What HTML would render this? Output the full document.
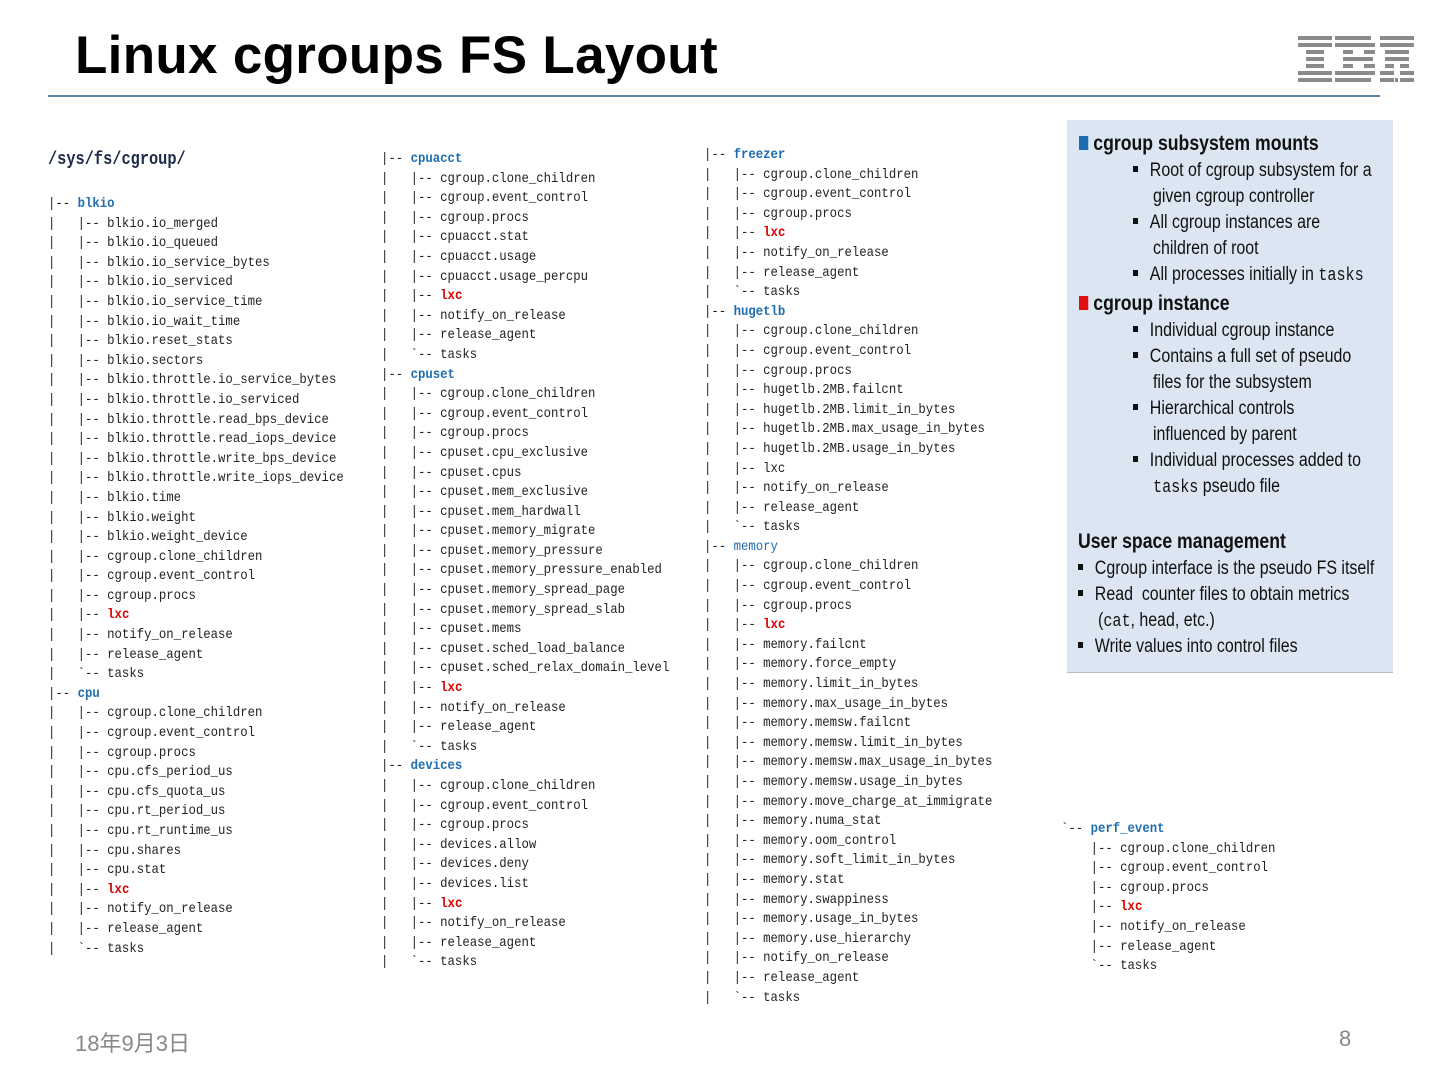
<!DOCTYPE html>
<html><head><meta charset="utf-8"><style>
body{margin:0;width:1440px;height:1080px;background:#fff;position:relative;overflow:hidden;font-family:"Liberation Sans",sans-serif}
.t{position:absolute;left:75px;top:25px;font-size:53px;font-weight:bold;color:#000;letter-spacing:0.3px}
.hr{position:absolute;left:48px;top:95px;width:1332px;height:2px;background:#5a85a8}
pre{position:absolute;margin:0;font-family:"Liberation Mono",monospace;font-size:14px;line-height:19.6px;color:#222;transform:scaleX(0.88);transform-origin:0 0}
.b{color:#1f6db0;font-weight:bold}
.r{color:#d00;font-weight:bold}
.root{position:absolute;left:48px;top:150px;font-family:"Liberation Mono",monospace;font-size:18px;font-weight:bold;color:#1d2a48;transform:scaleX(0.85);transform-origin:0 0}
.box{position:absolute;left:1067px;top:120px;width:326px;height:552px;background:#dce6f2;border-bottom:1px solid #bbb}
.l{position:absolute;font-family:"Liberation Sans",sans-serif;font-size:19px;color:#111;white-space:nowrap;line-height:26px;transform:scaleX(0.84);transform-origin:0 0}
.h{font-weight:bold;font-size:21px}
.sq{display:inline-block;width:11px;height:14px;margin-right:6px;vertical-align:0}
.bu{display:inline-block;width:6px;height:6px;background:#111;vertical-align:4px;margin-right:14px}
.m{font-family:"Liberation Mono",monospace;font-size:18px}
.f{position:absolute;top:1026px;font-size:22px;color:#888;font-family:"Liberation Sans","Noto Sans CJK JP",sans-serif}
</style></head><body>
<div class="t">Linux cgroups FS Layout</div>
<div class="hr"></div>
<svg style="position:absolute;left:1298px;top:36px" width="116" height="47" viewBox="0 0 116 47">
<g fill="#8a8a8a">
<rect x="0" y="0" width="34" height="4"/><rect x="37" y="0" width="36" height="4"/><rect x="82" y="0" width="34" height="4"/>
<rect x="0" y="7" width="34" height="4"/><rect x="37" y="7" width="40" height="4"/><rect x="82" y="7" width="34" height="4"/>
<rect x="8" y="14" width="18" height="4"/><rect x="45" y="14" width="10" height="4"/><rect x="66" y="14" width="11" height="4"/><rect x="87" y="14" width="24" height="4"/>
<rect x="8" y="21" width="18" height="4"/><rect x="45" y="21" width="30" height="4"/><rect x="87" y="21" width="24" height="4"/>
<rect x="8" y="28" width="18" height="4"/><rect x="45" y="28" width="10" height="4"/><rect x="66" y="28" width="11" height="4"/><rect x="87" y="28" width="9" height="4"/><rect x="102" y="28" width="9" height="4"/>
<rect x="0" y="35" width="34" height="4"/><rect x="37" y="35" width="40" height="4"/><rect x="82" y="35" width="14" height="4"/><rect x="102" y="35" width="14" height="4"/>
<rect x="0" y="42" width="34" height="4"/><rect x="37" y="42" width="36" height="4"/><rect x="82" y="42" width="14" height="4"/><rect x="97" y="42" width="3" height="4"/><rect x="102" y="42" width="14" height="4"/>
</g></svg>

<div class="root">/sys/fs/cgroup/</div>
<pre style="left:48px;top:195px">|-- <span class="b">blkio</span>
|   |-- blkio.io_merged
|   |-- blkio.io_queued
|   |-- blkio.io_service_bytes
|   |-- blkio.io_serviced
|   |-- blkio.io_service_time
|   |-- blkio.io_wait_time
|   |-- blkio.reset_stats
|   |-- blkio.sectors
|   |-- blkio.throttle.io_service_bytes
|   |-- blkio.throttle.io_serviced
|   |-- blkio.throttle.read_bps_device
|   |-- blkio.throttle.read_iops_device
|   |-- blkio.throttle.write_bps_device
|   |-- blkio.throttle.write_iops_device
|   |-- blkio.time
|   |-- blkio.weight
|   |-- blkio.weight_device
|   |-- cgroup.clone_children
|   |-- cgroup.event_control
|   |-- cgroup.procs
|   |-- <span class="r">lxc</span>
|   |-- notify_on_release
|   |-- release_agent
|   `-- tasks
|-- <span class="b">cpu</span>
|   |-- cgroup.clone_children
|   |-- cgroup.event_control
|   |-- cgroup.procs
|   |-- cpu.cfs_period_us
|   |-- cpu.cfs_quota_us
|   |-- cpu.rt_period_us
|   |-- cpu.rt_runtime_us
|   |-- cpu.shares
|   |-- cpu.stat
|   |-- <span class="r">lxc</span>
|   |-- notify_on_release
|   |-- release_agent
|   `-- tasks</pre>

<pre style="left:381px;top:150px">|-- <span class="b">cpuacct</span>
|   |-- cgroup.clone_children
|   |-- cgroup.event_control
|   |-- cgroup.procs
|   |-- cpuacct.stat
|   |-- cpuacct.usage
|   |-- cpuacct.usage_percpu
|   |-- <span class="r">lxc</span>
|   |-- notify_on_release
|   |-- release_agent
|   `-- tasks
|-- <span class="b">cpuset</span>
|   |-- cgroup.clone_children
|   |-- cgroup.event_control
|   |-- cgroup.procs
|   |-- cpuset.cpu_exclusive
|   |-- cpuset.cpus
|   |-- cpuset.mem_exclusive
|   |-- cpuset.mem_hardwall
|   |-- cpuset.memory_migrate
|   |-- cpuset.memory_pressure
|   |-- cpuset.memory_pressure_enabled
|   |-- cpuset.memory_spread_page
|   |-- cpuset.memory_spread_slab
|   |-- cpuset.mems
|   |-- cpuset.sched_load_balance
|   |-- cpuset.sched_relax_domain_level
|   |-- <span class="r">lxc</span>
|   |-- notify_on_release
|   |-- release_agent
|   `-- tasks
|-- <span class="b">devices</span>
|   |-- cgroup.clone_children
|   |-- cgroup.event_control
|   |-- cgroup.procs
|   |-- devices.allow
|   |-- devices.deny
|   |-- devices.list
|   |-- <span class="r">lxc</span>
|   |-- notify_on_release
|   |-- release_agent
|   `-- tasks</pre>

<pre style="left:704px;top:146px">|-- <span class="b">freezer</span>
|   |-- cgroup.clone_children
|   |-- cgroup.event_control
|   |-- cgroup.procs
|   |-- <span class="r">lxc</span>
|   |-- notify_on_release
|   |-- release_agent
|   `-- tasks
|-- <span class="b">hugetlb</span>
|   |-- cgroup.clone_children
|   |-- cgroup.event_control
|   |-- cgroup.procs
|   |-- hugetlb.2MB.failcnt
|   |-- hugetlb.2MB.limit_in_bytes
|   |-- hugetlb.2MB.max_usage_in_bytes
|   |-- hugetlb.2MB.usage_in_bytes
|   |-- lxc
|   |-- notify_on_release
|   |-- release_agent
|   `-- tasks
|-- <span class="b" style="font-weight:normal">memory</span>
|   |-- cgroup.clone_children
|   |-- cgroup.event_control
|   |-- cgroup.procs
|   |-- <span class="r">lxc</span>
|   |-- memory.failcnt
|   |-- memory.force_empty
|   |-- memory.limit_in_bytes
|   |-- memory.max_usage_in_bytes
|   |-- memory.memsw.failcnt
|   |-- memory.memsw.limit_in_bytes
|   |-- memory.memsw.max_usage_in_bytes
|   |-- memory.memsw.usage_in_bytes
|   |-- memory.move_charge_at_immigrate
|   |-- memory.numa_stat
|   |-- memory.oom_control
|   |-- memory.soft_limit_in_bytes
|   |-- memory.stat
|   |-- memory.swappiness
|   |-- memory.usage_in_bytes
|   |-- memory.use_hierarchy
|   |-- notify_on_release
|   |-- release_agent
|   `-- tasks</pre>

<pre style="left:1061px;top:820px">`-- <span class="b">perf_event</span>
    |-- cgroup.clone_children
    |-- cgroup.event_control
    |-- cgroup.procs
    |-- <span class="r">lxc</span>
    |-- notify_on_release
    |-- release_agent
    `-- tasks</pre>

<div class="box"></div>
<div class="l h" style="left:1079px;top:131px"><span class="sq" style="background:#1f6db0"></span>cgroup subsystem mounts</div>
<div class="l" style="left:1133px;top:158px"><span class="bu"></span>Root of cgroup subsystem for a</div>
<div class="l" style="left:1153px;top:184px">given cgroup controller</div>
<div class="l" style="left:1133px;top:210px"><span class="bu"></span>All cgroup instances are</div>
<div class="l" style="left:1153px;top:236px">children of root</div>
<div class="l" style="left:1133px;top:262px"><span class="bu"></span>All processes initially in <span class="m">tasks</span></div>
<div class="l h" style="left:1079px;top:291px"><span class="sq" style="background:#e01010"></span>cgroup instance</div>
<div class="l" style="left:1133px;top:318px"><span class="bu"></span>Individual cgroup instance</div>
<div class="l" style="left:1133px;top:344px"><span class="bu"></span>Contains a full set of pseudo</div>
<div class="l" style="left:1153px;top:370px">files for the subsystem</div>
<div class="l" style="left:1133px;top:396px"><span class="bu"></span>Hierarchical controls</div>
<div class="l" style="left:1153px;top:422px">influenced by parent</div>
<div class="l" style="left:1133px;top:448px"><span class="bu"></span>Individual processes added to</div>
<div class="l" style="left:1153px;top:474px"><span class="m">tasks</span> pseudo file</div>
<div class="l h" style="left:1078px;top:529px">User space management</div>
<div class="l" style="left:1078px;top:556px"><span class="bu"></span>Cgroup interface is the pseudo FS itself</div>
<div class="l" style="left:1078px;top:582px"><span class="bu"></span>Read&nbsp; counter files to obtain metrics</div>
<div class="l" style="left:1098px;top:608px">(<span class="m">cat</span>, head, etc.)</div>
<div class="l" style="left:1078px;top:634px"><span class="bu"></span>Write values into control files</div>

<div class="f" style="left:75px">18年9月3日</div>
<div class="f" style="left:1339px">8</div>
</body></html>
